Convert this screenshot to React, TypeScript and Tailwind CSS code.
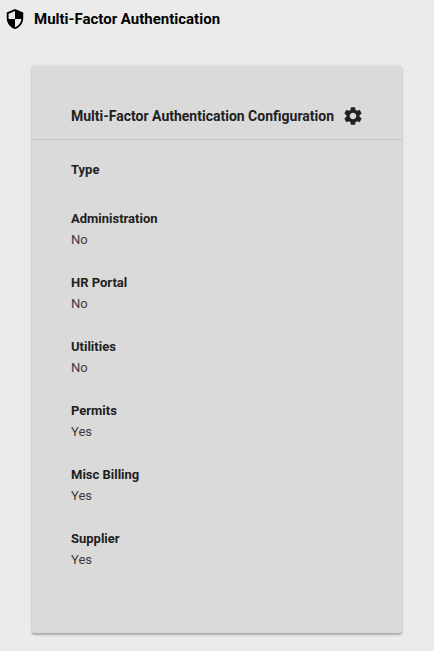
import { MdSettings, MdSecurity } from "react-icons/md";

const modules = [
  { name: "Administration", value: "No" },
  { name: "HR Portal", value: "No" },
  { name: "Utilities", value: "No" },
  { name: "Permits", value: "Yes" },
  { name: "Misc Billing", value: "Yes" },
  { name: "Supplier", value: "Yes" },
];

export default function App() {
  return (
    <main className="min-h-screen bg-[#ebebeb] pb-4 font-[Roboto,sans-serif] text-[#212121]">
      <header className="flex h-[38px] items-center gap-2 px-1 text-black">
        <MdSecurity className="size-[22px]" aria-hidden="true" />
        <h1 className="text-[15px] leading-5 font-bold">Multi-Factor Authentication</h1>
      </header>
      <section className="mx-8 mt-7 rounded-xs bg-[#dadada] pt-[39px] pb-[63px] shadow-[0_2px_2px_rgba(0,0,0,0.25),0_0_3px_rgba(0,0,0,0.1)]">
        <div className="flex items-center gap-2 border-b border-[#c6c6c6] px-[39px] pb-3">
          <h2 className="text-[14px] leading-5 font-bold whitespace-nowrap">Multi-Factor Authentication Configuration</h2>
          <button type="button" aria-label="Configure" className="shrink-0">
            <MdSettings className="size-[22px]" />
          </button>
        </div>
        <div className="px-[39px] pt-5 text-[13px] leading-5">
          <h3 className="font-bold">Type</h3>
          <dl className="mt-[29px] flex flex-col gap-[23px]">
            {modules.map((m) => (
              <div key={m.name} className="flex flex-col gap-px">
                <dt className="font-bold">{m.name}</dt>
                <dd className="text-[#3c3c3c]">{m.value}</dd>
              </div>
            ))}
          </dl>
        </div>
      </section>
    </main>
  );
}
